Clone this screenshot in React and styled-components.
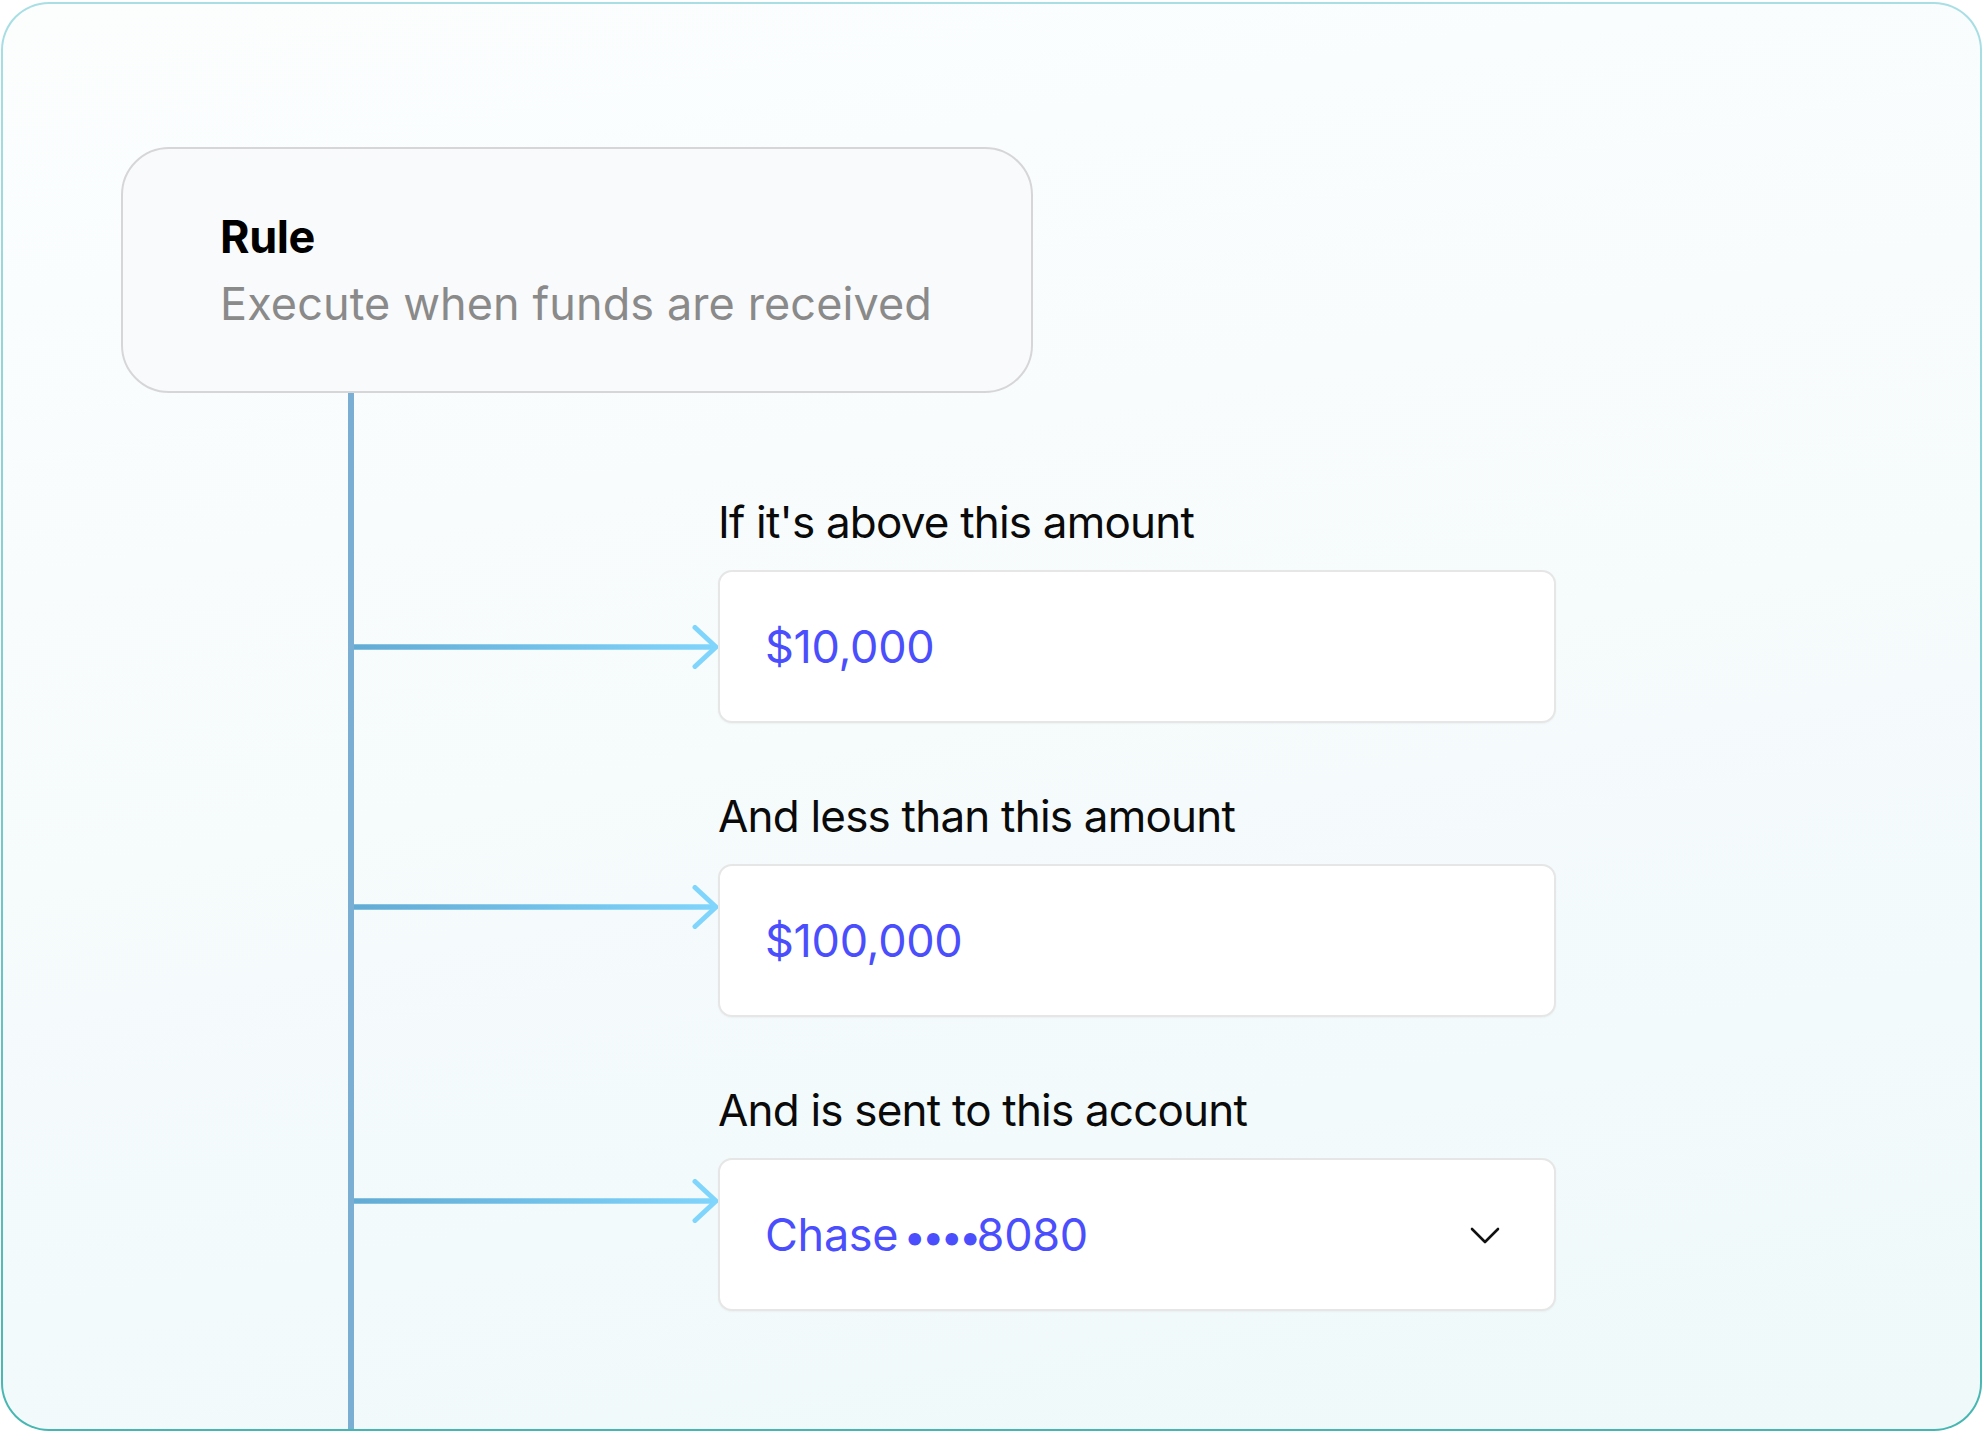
import React from 'react';
import styled, { createGlobalStyle } from 'styled-components';

const GlobalStyle = createGlobalStyle`
  *{
    margin: 0;
    padding: 0;
    box-sizing: border-box;
  }
  body{
    font-family: Inter, "Noto Sans", sans-serif;
    background: #ffffff;
  }
`

const Page = styled.div`
  padding: 2px 1px 1px 1px;
  width: 1983px;
  height: 1432px;
`

const Card = styled.section`
  height: 100%;
  border: 2px solid transparent;
  border-radius: 48px;
  background:
    linear-gradient(170deg, #fcfefe 0%, #f6fbfc 50%, #eff9fa 100%) padding-box,
    linear-gradient(180deg, #a9dfe4 0%, #7ccdd0 50%, #45b6b1 100%) border-box;
  padding: 143px 0 0 118px;
  display: flex;
  flex-direction: column;
  overflow: hidden;
`

const RuleBox = styled.div`
  width: 912px;
  height: 246px;
  background: #f9fafb;
  border: 2px solid #d6d6d8;
  border-radius: 48px;
  padding: 54px 0 0 97px;
`

const RuleTitle = styled.h2`
  font-size: 45px;
  line-height: 67px;
  font-weight: 700;
  color: #000;
  letter-spacing: -0.4px;
`

const RuleText = styled.p`
  font-size: 45px;
  line-height: 67px;
  font-weight: 400;
  color: #8a8a8a;
  letter-spacing: 0.1px;
`

const Tree = styled.div`
  flex: 1;
  margin-left: 227px;
  border-left: 6px solid #7aaed3;
  padding-top: 103px;
  display: grid;
  grid-template-columns: 364px 838px;
  align-content: start;
`

const Label = styled.div`
  grid-column: 2;
  font-size: 44px;
  line-height: 53px;
  color: #0a0a0a;
  margin-bottom: 21px;
  letter-spacing: -0.8px;
`

const ArrowCell = styled.div`
  grid-column: 1;
  align-self: ${(p) => (p.$centered ? 'center' : 'start')};
  margin-top: ${(p) => (p.$centered ? '0' : '21px')};
  height: 44px;
  margin-bottom: ${(p) => (p.$last ? '0' : '67px')};
`

const Box = styled.div`
  grid-column: 2;
  height: 153px;
  background: #fff;
  border: 2px solid #e6e6e6;
  border-radius: 14px;
  box-shadow: 0 1px 2px rgba(0, 0, 0, 0.04);
  padding: 0 54px 0 45px;
  display: flex;
  align-items: center;
  justify-content: space-between;
  margin-bottom: ${(p) => (p.$last ? '0' : '67px')};
`

const Value = styled.span`
  font-size: 45px;
  color: #4b4efc;
  letter-spacing: -0.3px;
`

const Dots = styled.span`
  font-size: 40px;
  letter-spacing: -4px;
  margin: 0 -1px 0 -7px;
`

function Arrow({ id }) {
  return (
    <svg width="364" height="44" viewBox="0 0 364 44" style={{ display: 'block' }}>
      <defs>
        <linearGradient id={id} x1="0" y1="0" x2="364" y2="0" gradientUnits="userSpaceOnUse">
          <stop offset="0" stopColor="#62abd5" />
          <stop offset="1" stopColor="#80d5fc" />
        </linearGradient>
      </defs>
      <line x1="0" y1="22" x2="361" y2="22" stroke={`url(#${id})`} strokeWidth="5.5" />
      <polyline
        points="341,2.5 362,22 341,41.5"
        fill="none"
        stroke="#80d5fc"
        strokeWidth="5"
        strokeLinecap="round"
        strokeLinejoin="round"
      />
    </svg>
  )
}

function Chevron() {
  return (
    <svg width="30" height="18" viewBox="0 0 30 18">
      <polyline
        points="2,3 15,16 28,3"
        fill="none"
        stroke="#111"
        strokeWidth="2.6"
        strokeLinecap="round"
        strokeLinejoin="round"
      />
    </svg>
  )
}

const fields = [
  { label: "If it's above this amount", value: '$10,000', centered: true },
  { label: 'And less than this amount', value: '$100,000' },
  { label: 'And is sent to this account', bank: 'Chase', last4: '8080', select: true },
]

export default function App() {
  return (
    <Page>
      <GlobalStyle />
      <Card>
        <RuleBox>
          <RuleTitle>Rule</RuleTitle>
          <RuleText>Execute when funds are received</RuleText>
        </RuleBox>
        <Tree>
          {fields.map((f, i) => {
            const last = i === fields.length - 1
            return (
              <React.Fragment key={f.label}>
                <Label>{f.label}</Label>
                <ArrowCell $centered={f.centered} $last={last}>
                  <Arrow id={`arrow-grad-${i}`} />
                </ArrowCell>
                <Box $last={last}>
                  {f.select ? (
                    <Value>
                      {f.bank} <Dots>••••</Dots>{f.last4}
                    </Value>
                  ) : (
                    <Value>{f.value}</Value>
                  )}
                  {f.select && <Chevron />}
                </Box>
              </React.Fragment>
            )
          })}
        </Tree>
      </Card>
    </Page>
  )
}
